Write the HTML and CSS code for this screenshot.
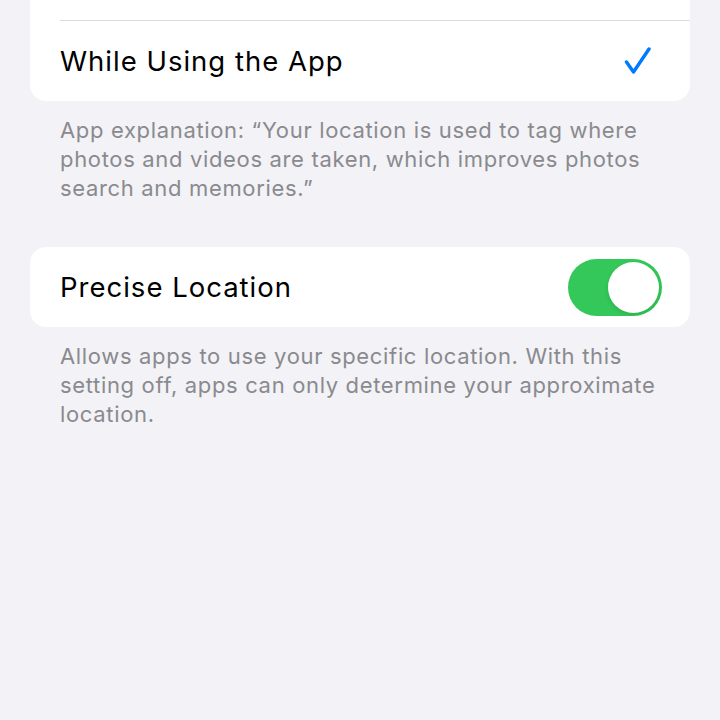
FILE: index.html
```html
<html>
<head>
  <link rel="stylesheet" href="styles.css">
</head>
<body>
  <div class="screen">
    <div class="group first">
      <div class="row top-row"></div>
      <div class="row">
        <span class="label">While Using the App</span>
        <svg class="check" width="30" height="28" viewBox="0 0 30 28">
          <path d="M3.5 15 L10.5 25 L26 2" fill="none" stroke="#007aff" stroke-width="3.4" stroke-linecap="round" stroke-linejoin="round"/>
        </svg>
      </div>
    </div>
    <p class="footer">App explanation: “Your location is used to tag where photos and videos are taken, which improves photos search and memories.”</p>

    <div class="group">
      <div class="row">
        <span class="label">Precise Location</span>
        <div class="toggle"><div class="knob"></div></div>
      </div>
    </div>
    <p class="footer">Allows apps to use your specific location. With this setting off, apps can only determine your approximate location.</p>
  </div>
</body>
</html>
```

FILE: styles.css
```css
body {
  margin: 0;
  background: #f2f2f7;
  font-family: Inter, "Noto Sans", sans-serif;
}

.screen {
  width: 720px;
  height: 720px;
  overflow: hidden;
  padding: 0 30px;
  box-sizing: border-box;
}

.group {
  background: #fff;
  border-radius: 16px;
}

.group.first {
  margin-top: -60px;
}

.row {
  height: 80px;
  margin-left: 30px;
  padding-right: 28px;
  display: flex;
  align-items: center;
  justify-content: space-between;
}

.top-row {
  border-bottom: 1px solid #dcdce0;
}

.label {
  font-size: 27.5px;
  color: #000;
  letter-spacing: 1px;
}

.check {
  margin-right: 9px;
}

.footer {
  margin: 0;
  padding: 15px 22px 44px 30px;
  font-size: 22px;
  line-height: 29px;
  color: #8a8a8e;
  letter-spacing: 0.66px;
}

.toggle {
  width: 94px;
  height: 57px;
  border-radius: 29px;
  background: #34c759;
  position: relative;
}

.knob {
  position: absolute;
  right: 3px;
  top: 3px;
  width: 51px;
  height: 51px;
  border-radius: 50%;
  background: #fff;
  box-shadow: 0 2px 4px rgba(0,0,0,0.12);
}
```
